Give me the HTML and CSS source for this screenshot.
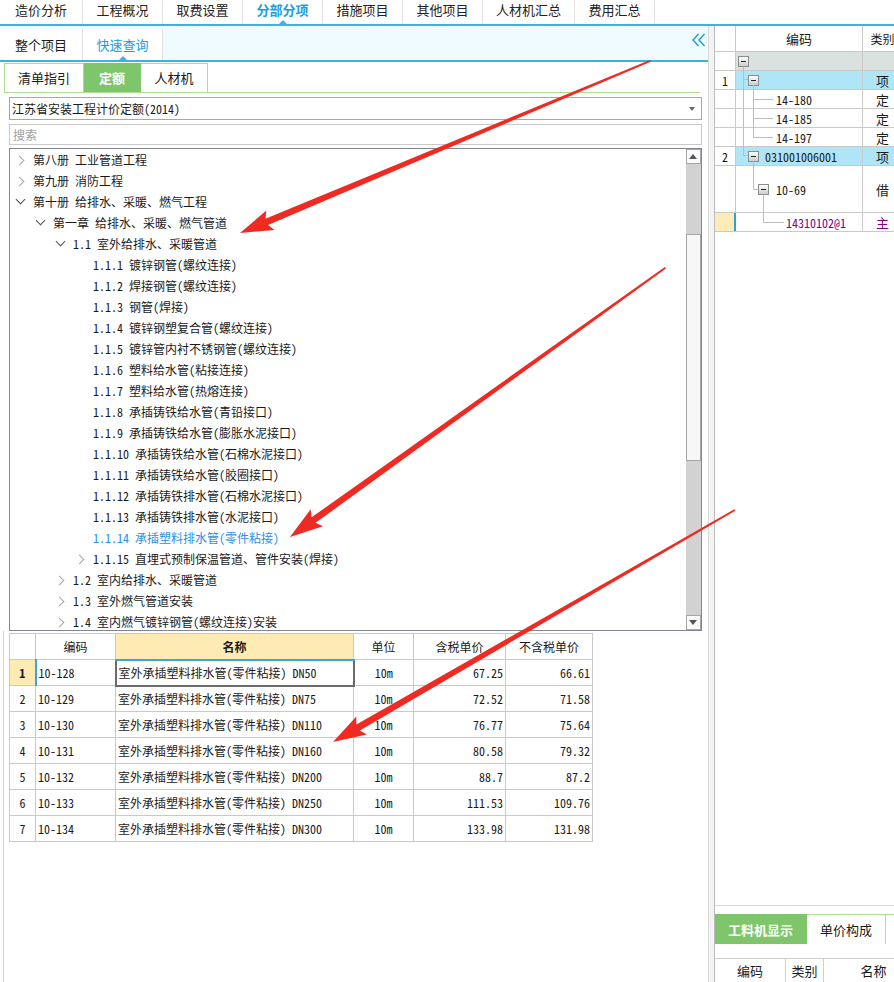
FILE: index.html
```html
<!DOCTYPE html>
<html lang="zh-CN">
<head>
<meta charset="utf-8">
<title>分部分项 - 快速查询</title>
<link rel="stylesheet" href="styles.css">
</head>
<body>
<div class="app">
  <nav class="topnav">
    <div class="tab first">造价分析</div>
    <div class="tab">工程概况</div>
    <div class="tab">取费设置</div>
    <div class="tab active">分部分项</div>
    <div class="tab">措施项目</div>
    <div class="tab">其他项目</div>
    <div class="tab wide">人材机汇总</div>
    <div class="tab">费用汇总</div>
  </nav>
  <div class="main">
    <section class="left">
      <div class="subnav">
        <div class="stab first">整个项目</div>
        <div class="stab active">快速查询</div>
        <svg class="collapse" width="14" height="14" viewBox="0 0 14 14"><path d="M6.5 1 L1 7 L6.5 13"/><path d="M12.5 1 L7 7 L12.5 13"/></svg>
      </div>
      <div class="kindtabs">
        <div class="ktab k1">清单指引</div>
        <div class="ktab k2 on">定额</div>
        <div class="ktab k3">人材机</div>
      </div>
      <div class="select mono"><span>江苏省安装工程计价定额(2014)</span><i class="caret"></i></div>
      <div class="search">搜索</div>
      <div class="tree">
        <ul class="tree-list mono">
          <li class="node l0"><i class="chev r"></i><span>第八册 工业管道工程</span></li>
          <li class="node l0"><i class="chev r"></i><span>第九册 消防工程</span></li>
          <li class="node l0"><i class="chev d"></i><span>第十册 给排水、采暖、燃气工程</span></li>
          <li class="node l1"><i class="chev d"></i><span>第一章 给排水、采暖、燃气管道</span></li>
          <li class="node l2"><i class="chev d"></i><span>1.1 室外给排水、采暖管道</span></li>
          <li class="node l3"><i class="chev"></i><span>1.1.1 镀锌钢管(螺纹连接)</span></li>
          <li class="node l3"><i class="chev"></i><span>1.1.2 焊接钢管(螺纹连接)</span></li>
          <li class="node l3"><i class="chev"></i><span>1.1.3 钢管(焊接)</span></li>
          <li class="node l3"><i class="chev"></i><span>1.1.4 镀锌钢塑复合管(螺纹连接)</span></li>
          <li class="node l3"><i class="chev"></i><span>1.1.5 镀锌管内衬不锈钢管(螺纹连接)</span></li>
          <li class="node l3"><i class="chev"></i><span>1.1.6 塑料给水管(粘接连接)</span></li>
          <li class="node l3"><i class="chev"></i><span>1.1.7 塑料给水管(热熔连接)</span></li>
          <li class="node l3"><i class="chev"></i><span>1.1.8 承插铸铁给水管(青铅接口)</span></li>
          <li class="node l3"><i class="chev"></i><span>1.1.9 承插铸铁给水管(膨胀水泥接口)</span></li>
          <li class="node l3"><i class="chev"></i><span>1.1.10 承插铸铁给水管(石棉水泥接口)</span></li>
          <li class="node l3"><i class="chev"></i><span>1.1.11 承插铸铁给水管(胶圈接口)</span></li>
          <li class="node l3"><i class="chev"></i><span>1.1.12 承插铸铁排水管(石棉水泥接口)</span></li>
          <li class="node l3"><i class="chev"></i><span>1.1.13 承插铸铁排水管(水泥接口)</span></li>
          <li class="node l3 sel"><i class="chev"></i><span>1.1.14 承插塑料排水管(零件粘接)</span></li>
          <li class="node l3"><i class="chev r"></i><span>1.1.15 直埋式预制保温管道、管件安装(焊接)</span></li>
          <li class="node l2"><i class="chev r"></i><span>1.2 室内给排水、采暖管道</span></li>
          <li class="node l2"><i class="chev r"></i><span>1.3 室外燃气管道安装</span></li>
          <li class="node l2"><i class="chev r"></i><span>1.4 室内燃气镀锌钢管(螺纹连接)安装</span></li>
        </ul>
        <div class="vscroll">
          <div class="sbtn up"></div>
          <div class="track"><div class="thumb"></div></div>
          <div class="sbtn down"></div>
        </div>
      </div>
      <div class="grid-area">
        <table class="grid mono">
          <colgroup><col class="c1"><col class="c2"><col class="c3"><col class="c4"><col class="c5"><col class="c6"></colgroup>
          <thead>
            <tr><th></th><th>编码</th><th class="hl">名称</th><th>单位</th><th>含税单价</th><th>不含税单价</th></tr>
          </thead>
          <tbody>
            <tr class="cur"><td class="n">1</td><td>10-128</td><td class="focus">室外承插塑料排水管(零件粘接) DN50</td><td class="u">10m</td><td class="p">67.25</td><td class="p">66.61</td></tr>
            <tr><td class="n">2</td><td>10-129</td><td>室外承插塑料排水管(零件粘接) DN75</td><td class="u">10m</td><td class="p">72.52</td><td class="p">71.58</td></tr>
            <tr><td class="n">3</td><td>10-130</td><td>室外承插塑料排水管(零件粘接) DN110</td><td class="u">10m</td><td class="p">76.77</td><td class="p">75.64</td></tr>
            <tr><td class="n">4</td><td>10-131</td><td>室外承插塑料排水管(零件粘接) DN160</td><td class="u">10m</td><td class="p">80.58</td><td class="p">79.32</td></tr>
            <tr><td class="n">5</td><td>10-132</td><td>室外承插塑料排水管(零件粘接) DN200</td><td class="u">10m</td><td class="p">88.7</td><td class="p">87.2</td></tr>
            <tr><td class="n">6</td><td>10-133</td><td>室外承插塑料排水管(零件粘接) DN250</td><td class="u">10m</td><td class="p">111.53</td><td class="p">109.76</td></tr>
            <tr><td class="n">7</td><td>10-134</td><td>室外承插塑料排水管(零件粘接) DN300</td><td class="u">10m</td><td class="p">133.98</td><td class="p">131.98</td></tr>
          </tbody>
        </table>
      </div>
    </section>
    <div class="splitter"></div>
    <section class="right">
      <div class="rtable mono">
        <div class="rrow head"><div class="rn"></div><div class="rcd">编码</div><div class="rty">类别</div></div>
        <div class="rrow filter"><div class="rn"></div><div class="rcd p2"><i class="minus"></i></div><div class="rty"></div></div>
        <div class="rrow hi"><div class="rn">1</div><div class="rcd p12"><i class="minus"></i></div><div class="rty">项</div></div>
        <div class="rrow"><div class="rn"></div><div class="rcd p40">14-180</div><div class="rty">定</div></div>
        <div class="rrow"><div class="rn"></div><div class="rcd p40">14-185</div><div class="rty">定</div></div>
        <div class="rrow"><div class="rn"></div><div class="rcd p40">14-197</div><div class="rty">定</div></div>
        <div class="rrow hi"><div class="rn">2</div><div class="rcd p12"><i class="minus"></i><span class="g6">031001006001</span></div><div class="rty">项</div></div>
        <div class="rrow tall"><div class="rn"></div><div class="rcd p22"><i class="minus"></i><span class="g7">10-69</span></div><div class="rty">借</div></div>
        <div class="rrow main2"><div class="rn"></div><div class="rcd p50 purple">14310102@1</div><div class="rty purple">主</div></div>
        <svg class="links" width="180" height="210" viewBox="0 0 180 210">
          <path d="M28.5 40.5V129.5M28.5 53.5H33M28.5 129.5H33M38.5 59V111.5M38.5 73.5H58M38.5 92.5H58M38.5 111.5H58M38.5 135V163.5H43M48.5 168.5V196.5H69"/>
        </svg>
      </div>
      <div class="rbottom">
        <div class="rtabs">
          <div class="rtab on">工料机显示</div>
          <div class="rtab t2">单价构成</div>
          <div class="rtab t3"></div>
        </div>
        <div class="rhead">
          <div class="h1">编码</div>
          <div class="h2">类别</div>
          <div class="h3">名称</div>
        </div>
      </div>
    </section>
  </div>
  <svg class="arrows" width="894" height="982" viewBox="0 0 894 982">
    <polygon transform="translate(240 233) rotate(157.24)" points="-445,-1 -29,-3.4 -33,-10.5 0,0 -33,10.5 -29,3.4 -445,1"/>
    <polygon transform="translate(290 537) rotate(144.35)" points="-462,-1 -29,-3.4 -33,-10.5 0,0 -33,10.5 -29,3.4 -462,1"/>
    <polygon transform="translate(333 742) rotate(150)" points="-464,-1 -29,-3.4 -33,-10.5 0,0 -33,10.5 -29,3.4 -464,1"/>
  </svg>
</div>
</body>
</html>
```

FILE: styles.css
```css
* { box-sizing: border-box; }
html, body { margin: 0; padding: 0; background: #fff; }
body {
  font-family: "Noto Sans CJK SC", "Noto Sans", sans-serif;
  font-size: 12px;
  color: #1a1a1a;
}
.mono { font-family: "Noto Sans Mono CJK SC", "Noto Sans CJK SC", monospace; }
.app { position: relative; width: 894px; height: 982px; overflow: hidden; }

/* top navigation */
.topnav { display: flex; height: 26px; border-bottom: 2px solid #3db2e2; }
.tab {
  position: relative; width: 80px; height: 24px; line-height: 20px;
  text-align: center; font-size: 13px; color: #222;
  border-right: 1px solid #e2e2e2;
}
.tab.first { width: 83px; }
.tab.wide { width: 92px; }
.tab.active { color: #17a0e2; font-weight: bold; }
.tab.active::after, .stab.active::after {
  content: ""; position: absolute; left: 50%; bottom: 0; margin-left: -4px;
  border-left: 4px solid transparent; border-right: 4px solid transparent;
  border-bottom: 4px solid #3db2e2;
}

.main { display: flex; height: 956px; }

/* left panel */
.left { width: 708px; flex: none; display: flex; flex-direction: column; }
.subnav {
  display: flex; align-items: flex-start; height: 36px; padding-top: 3px;
  background: #effbfe; border-bottom: 2px solid #3db2e2;
}
.stab {
  position: relative; width: 80px; height: 31px; line-height: 31px;
  text-align: center; font-size: 13px; background: #fff;
  border-right: 1px solid #e2e2e2;
}
.stab.first { width: 83px; }
.stab.active { color: #17a0e2; }
.collapse { margin: 4px 2px 0 auto; fill: none; stroke: #1a9ad6; stroke-width: 1.4; }

.kindtabs {
  display: flex; height: 30px; margin: 1px 8px 0 4px;
  border-bottom: 1px solid #a9de94;
}
.ktab {
  height: 29px; line-height: 28px; text-align: center; font-size: 13px;
  border-top: 1px solid #a9de94; border-right: 1px solid #a9de94;
}
.k1 { width: 80px; border-left: 1px solid #a9de94; }
.k2 { width: 57px; }
.k3 { width: 67px; }
.ktab.on { background: #7ec56b; color: #fff; font-weight: bold; border-color: #7ec56b; }

.select {
  display: flex; align-items: center; justify-content: space-between;
  height: 23px; margin: 4px 6px 0 9px; padding: 0 6px 0 2px;
  border: 1px solid #a8a8a8;
}
.caret {
  width: 0; height: 0;
  border-left: 3px solid transparent; border-right: 3px solid transparent;
  border-top: 4px solid #6b6b6b;
}
.search {
  height: 21px; margin: 4px 6px 0 9px; padding-left: 3px; line-height: 19px;
  border: 1px solid #c9c9c9; color: #a0a0a0;
}

.tree {
  display: flex; height: 483px; margin: 3px 6px 0 9px;
  border: 1px solid #82868f;
}
.tree-list { flex: 1; margin: 0; padding: 0; list-style: none; overflow: hidden; }
.node { display: flex; align-items: center; height: 21px; white-space: nowrap; }
.l0 { padding-left: 3px; }
.l1 { padding-left: 23px; }
.l2 { padding-left: 43px; }
.l3 { padding-left: 63px; }
.node.sel { color: #2a8fe6; }
.chev { position: relative; flex: none; width: 20px; height: 21px; }
.chev.r::before, .chev.d::before { content: ""; position: absolute; transform: rotate(45deg); }
.chev.r::before {
  left: 3px; top: 8px; width: 6px; height: 6px;
  border-top: 1.5px solid #a6a6a6; border-right: 1.5px solid #a6a6a6;
}
.chev.d::before {
  left: 4px; top: 5px; width: 6px; height: 6px;
  border-right: 1.5px solid #505050; border-bottom: 1.5px solid #505050;
}

.vscroll { flex: none; width: 15px; display: flex; flex-direction: column; background: #d2d2d2; }
.sbtn { position: relative; height: 15px; background: #fbfbfb; border: 1px solid #a6a6a6; }
.sbtn::after {
  content: ""; position: absolute; left: 2px; width: 0; height: 0;
  border-left: 4.5px solid transparent; border-right: 4.5px solid transparent;
}
.up::after { top: 4px; border-bottom: 5px solid #555; }
.down::after { top: 4px; border-top: 5px solid #555; }
.track { flex: 1; padding-top: 70px; }
.thumb { height: 227px; background: #f7f7f7; border: 1px solid #a6a6a6; }

.grid-area {
  flex: 1; margin-left: 3px; padding: 2px 0 0 5px;
  border-left: 1px solid #d0d0d0;
}
.grid { border-collapse: collapse; table-layout: fixed; width: 583px; }
.c1 { width: 26px; } .c2 { width: 80px; } .c3 { width: 238px; }
.c4 { width: 60px; } .c5 { width: 92px; } .c6 { width: 87px; }
.grid th, .grid td {
  height: 26px; padding: 0 2px; border: 1px solid #c9c9c9;
  white-space: nowrap; overflow: hidden; font-weight: normal;
}
.grid th { text-align: center; font-family: "Noto Sans CJK SC", sans-serif; }
.grid th.hl { background: #fdebb3; font-weight: bold; border-bottom: 2px solid #3aa7dc; }
.grid td.n, .grid td.u { text-align: center; }
.grid td.p { text-align: right; }
.grid tr.cur td.n { background: #fdebb3; font-weight: bold; border-right: 2px solid #3aa7dc; }
.grid td.focus { border: 2px solid #6a6a6a; }

/* splitter */
.splitter { width: 6px; flex: none; background: #f3f3f3; border-left: 1px solid #d9d9d9; }

/* right panel */
.right {
  flex: 1; display: flex; flex-direction: column;
  border-left: 1px solid #bcbcbc; overflow: hidden;
}
.rtable { position: relative; }
.rrow { display: flex; height: 19px; border-bottom: 1px solid #c9c9c9; }
.rrow.head { height: 26px; }
.rrow.tall { height: 47px; }
.rrow > div { display: flex; align-items: center; flex: none; border-right: 1px solid #c9c9c9; white-space: nowrap; }
.rn { width: 21px; justify-content: center; }
.rcd { width: 127px; }
.rty { width: 40px; justify-content: center; font-family: "Noto Sans CJK SC", sans-serif; font-size: 13px; }
.rrow.head > div { justify-content: center; font-size: 13px; font-family: "Noto Sans CJK SC", sans-serif; }
.rrow.head > .rty { font-size: 12px; }
.rrow.filter .rcd, .rrow.filter .rty { background: #d9e2de; }
.rrow.hi .rcd, .rrow.hi .rty { background: #aee6f8; }
.rrow.main2 .rn { background: #feecb8; border-right: 2px solid #2aa1d9; }
.p2 { padding-left: 2px; }
.p12 { padding-left: 12px; }
.p22 { padding-left: 22px; }
.p40 { padding-left: 40px; }
.p50 { padding-left: 50px; }
.g6 { margin-left: 6px; }
.g7 { margin-left: 7px; }
.purple { color: #800080; }
.minus {
  position: relative; flex: none; width: 11px; height: 11px;
  border: 1px solid #8c8c8c; background: linear-gradient(#ffffff, #cdcdcd);
}
.minus::after {
  content: ""; position: absolute; left: 2px; right: 2px; top: 4px;
  height: 1px; background: #222;
}
.links { position: absolute; left: 0; top: 0; fill: none; stroke: #bdbdbd; stroke-width: 1; }

.rbottom { margin-top: auto; height: 77px; border-top: 1px solid #d9d9d9; padding-top: 8px; }
.rtabs { display: flex; height: 30px; }
.rtab {
  flex: none; height: 30px; line-height: 30px; text-align: center; font-size: 13px;
  border-top: 1px solid #a9de94; border-right: 1px solid #a9de94;
}
.rtab.on { width: 92px; background: #7ec56b; color: #fff; font-weight: bold; border-color: #7ec56b; }
.rtab.t2 { width: 79px; }
.rtab.t3 { width: 40px; }
.rhead { display: flex; height: 24px; margin-top: 14px; border-top: 1px solid #d0d0d0; }
.rhead div {
  flex: none; display: flex; align-items: center; justify-content: center;
  border-right: 1px solid #d0d0d0; font-size: 13px;
}
.h1 { width: 71px; } .h2 { width: 38px; } .h3 { width: 100px; }

/* annotation arrows */
.arrows { position: absolute; left: 0; top: 0; pointer-events: none; }
.arrows polygon { fill: #ef2a22; }
```
